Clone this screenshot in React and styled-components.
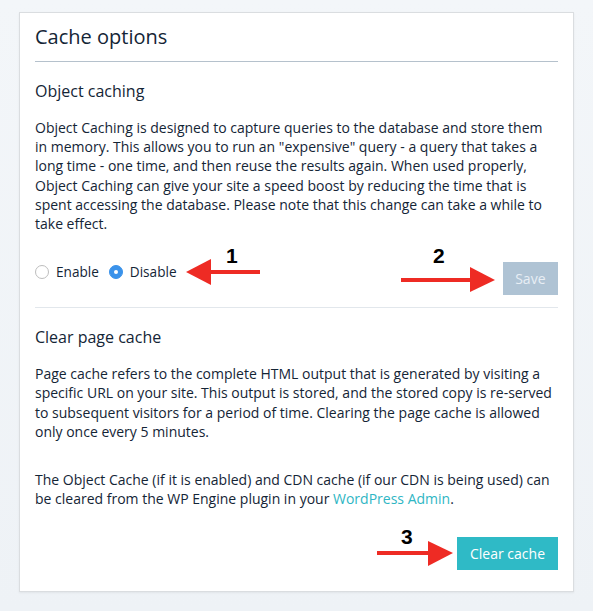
import React from "react";
import styled, { createGlobalStyle } from "styled-components";

const Global = createGlobalStyle`
  html, body { margin: 0; padding: 0; background: #f1f4f7; }
  body { font-family: "Open Sans", "Noto Sans", sans-serif; color: #142536; }
  * { box-sizing: border-box; }
`;

const Page = styled.div`
  position: relative;
  width: 593px;
  height: 611px;
  padding: 12px 0 0 19px;
  background: linear-gradient(#f3f6f9, #eef2f6);
`;

const Panel = styled.section`
  width: 555px;
  height: 580px;
  background: #fff;
  border: 1px solid #dadde0;
  box-shadow: 0 1px 2px rgba(0, 0, 0, 0.06);
  padding: 0 15px;
`;

const Title = styled.h1`
  margin: 0;
  font-weight: 400;
  font-size: 20px;
  line-height: 28px;
  padding: 10px 0 10px;
  border-bottom: 1px solid #b5c1cc;
  color: #142536;
`;

const Section = styled.div`
  padding-top: ${(p) => p.$top}px;
  border-bottom: ${(p) => (p.$divider ? "1px solid #e2e7ec" : "none")};
`;

const SectionTitle = styled.h2`
  margin: 0;
  font-weight: 400;
  font-size: 16px;
  line-height: 22px;
  color: #142536;
`;

const Para = styled.p`
  margin: ${(p) => p.$mt || 0}px 0 0;
  font-size: 14px;
  line-height: 19.2px;
  color: #142536;
`;

const Link = styled.a`
  color: #2fb6c4;
  text-decoration: none;
`;

const ActionRow = styled.div`
  display: flex;
  justify-content: ${(p) => (p.$end ? "flex-end" : "space-between")};
  align-items: flex-start;
  margin-top: ${(p) => p.$mt}px;
  padding-bottom: ${(p) => p.$pb}px;
`;

const RadioGroup = styled.div`
  display: flex;
  align-items: center;
  gap: 10px;
  margin-top: 1px;
  font-size: 13.6px;
  line-height: 18px;
`;

const RadioLabel = styled.label`
  display: flex;
  align-items: center;
  gap: 7px;
`;

const Radio = styled.span`
  width: 14px;
  height: 14px;
  border-radius: 50%;
  border: 1px solid ${(p) => (p.$on ? "#3a92ea" : "#bdbdbd")};
  background: ${(p) => (p.$on ? "#3a92ea" : "#fff")};
  display: flex;
  align-items: center;
  justify-content: center;
  &::after {
    content: "";
    width: 4px;
    height: 4px;
    border-radius: 50%;
    background: #fff;
    display: ${(p) => (p.$on ? "block" : "none")};
  }
`;

const Button = styled.button`
  border: none;
  height: 33px;
  padding: 0 ${(p) => p.$px}px;
  font-family: "Open Sans", "Noto Sans", sans-serif;
  font-size: 14px;
  color: ${(p) => (p.$disabled ? "#e8eef4" : "#fff")};
  background: ${(p) => (p.$disabled ? "#afc3d4" : "#2fbac6")};
`;

const Overlay = styled.svg`
  position: absolute;
  left: 0;
  top: 0;
  pointer-events: none;
`;

const Num = styled.text`
  font-family: "Liberation Sans", Arial, sans-serif;
  font-weight: 700;
  font-size: 21px;
  fill: #000;
`;

export default function App() {
  return (
    <Page>
      <Global />
      <Panel>
        <Title>Cache options</Title>
        <Section $top={18} $divider>
          <SectionTitle>Object caching</SectionTitle>
          <Para $mt={16}>
            Object Caching is designed to capture queries to the database and store them
            in memory. This allows you to run an "expensive" query - a query that takes a
            long time - one time, and then reuse the results again. When used properly,
            Object Caching can give your site a speed boost by reducing the time that is
            spent accessing the database. Please note that this change can take a while to
            take effect.
          </Para>
          <ActionRow $mt={29} $pb={12}>
            <RadioGroup>
              <RadioLabel>
                <Radio />
                Enable
              </RadioLabel>
              <RadioLabel>
                <Radio $on />
                Disable
              </RadioLabel>
            </RadioGroup>
            <Button $disabled $px={12.5}>Save</Button>
          </ActionRow>
        </Section>
        <Section $top={18}>
          <SectionTitle>Clear page cache</SectionTitle>
          <Para $mt={16}>
            Page cache refers to the complete HTML output that is generated by visiting a
            specific URL on your site. This output is stored, and the stored copy is re-served
            to subsequent visitors for a period of time. Clearing the page cache is allowed
            only once every 5 minutes.
          </Para>
          <Para $mt={29}>
            The Object Cache (if it is enabled) and CDN cache (if our CDN is being used) can
            be cleared from the WP Engine plugin in your <Link href="#">WordPress Admin</Link>.
          </Para>
          <ActionRow $mt={29} $pb={0} $end>
            <Button $px={13}>Clear cache</Button>
          </ActionRow>
        </Section>
      </Panel>
      <Overlay width="593" height="611" viewBox="0 0 593 611">
        <g fill="#ee2b24">
          <rect x="205" y="270" width="55" height="4" />
          <polygon points="186,272 211,259 211,285" />
          <rect x="401" y="278" width="75" height="4" />
          <polygon points="495,280 470,267 470,292" />
          <rect x="377" y="551" width="55" height="4" />
          <polygon points="453,553 428,541 428,566" />
        </g>
        <Num x="226" y="263">1</Num>
        <Num x="433" y="263">2</Num>
        <Num x="401" y="544">3</Num>
      </Overlay>
    </Page>
  );
}
